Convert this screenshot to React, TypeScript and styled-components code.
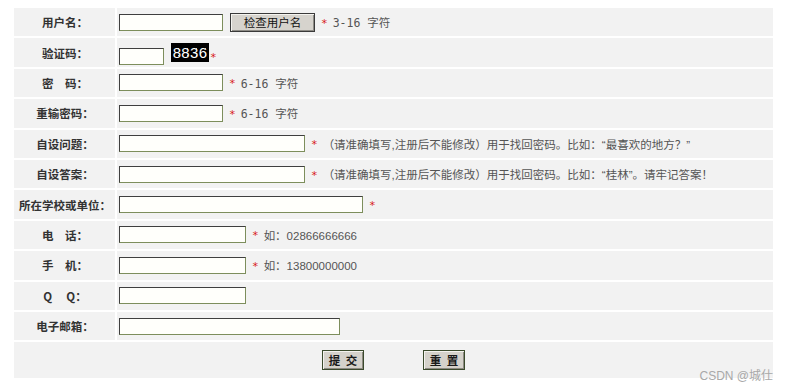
import React from "react";
import styled, { createGlobalStyle } from "styled-components";

const GlobalStyle = createGlobalStyle`
  html, body { margin: 0; padding: 0; background: #ffffff; }
  body { font-family: "Noto Sans CJK SC", "Noto Sans", sans-serif; }
`;

const Page = styled.div`
  position: relative;
  width: 788px;
  height: 390px;
  box-sizing: border-box;
  padding: 8px 15px 0 14px;
  overflow: hidden;
`;

const Table = styled.div`
  display: flex;
  flex-direction: column;
  gap: 2px;
  background: #ffffff;
`;

const Row = styled.div`
  display: grid;
  grid-template-columns: 101px 1fr;
  column-gap: 2px;
  height: 28.4px;
`;

const LabelCell = styled.div`
  background: #f2f2f2;
  display: flex;
  align-items: center;
  justify-content: center;
  font-size: 11.5px;
  font-weight: 700;
  color: #333333;
  white-space: pre;
  padding-left: 1px;
`;

const ValueCell = styled.div<{ $bottom?: boolean }>`
  background: #f2f2f2;
  display: flex;
  align-items: ${(p) => (p.$bottom ? "flex-end" : "center")};
  padding-left: 2px;
  padding-bottom: ${(p) => (p.$bottom ? "2px" : "0")};
  box-sizing: border-box;
  white-space: nowrap;
`;

const TextInput = styled.input<{ $w: number }>`
  box-sizing: border-box;
  width: ${(p) => p.$w}px;
  height: 17px;
  margin: 0;
  padding: 0 2px;
  background: #fffffb;
  border-style: solid;
  border-width: 1px;
  border-color: #3f3f3f #7d8e5c #7d8e5c #3f3f3f;
  outline: none;
  font-size: 11px;
`;

const CheckButton = styled.button`
  box-sizing: border-box;
  margin-left: 7px;
  width: 85px;
  height: 19px;
  padding: 0;
  background: #d6d3cd;
  border: 1px solid #3a3a3a;
  box-shadow: inset 1px 1px 0 #f4f3ef, inset -1px -1px 0 #8e8c86;
  font-family: "Noto Sans CJK SC", sans-serif;
  font-size: 11.5px;
  color: #111;
  line-height: 16px;
`;

const Star = styled.span`
  color: #d81818;
  font-family: "DejaVu Sans Mono", monospace;
  font-size: 11px;
  margin: 0 5px 0 6px;
  position: relative;
  top: 1px;
`;

const Hint = styled.span<{ $mono?: boolean }>`
  color: #555555;
  font-family: ${(p) =>
    p.$mono
      ? `"DejaVu Sans Mono", "Noto Sans CJK SC", monospace`
      : `"Liberation Sans", "Noto Sans CJK SC", sans-serif`};
  font-size: 11.5px;
`;

const Captcha = styled.span`
  display: inline-flex;
  align-items: center;
  justify-content: center;
  box-sizing: border-box;
  width: 38px;
  height: 19px;
  margin-left: 7px;
  margin-bottom: 3px;
  background-color: #000;
  background-image: radial-gradient(circle, #bdbdbd 0.5px, transparent 0.8px);
  background-size: 9px 7px;
  background-position: 3px 2px;
  color: #fff;
  font-family: "Liberation Sans", sans-serif;
  font-size: 15px;
  letter-spacing: 0.3px;
  line-height: 19px;
`;

const CaptchaStar = styled.span`
  color: #d81818;
  font-family: "DejaVu Sans Mono", monospace;
  font-size: 11px;
  margin-left: 1px;
  margin-bottom: 1px;
`;

const ButtonRow = styled.div`
  background: #f2f2f2;
  height: 36px;
  display: flex;
  align-items: center;
  justify-content: center;
  gap: 59px;
`;

const FormButton = styled.button`
  box-sizing: border-box;
  width: 42px;
  height: 20px;
  padding: 0;
  margin: 0;
  background: #d5d2cb;
  border: 1px solid #3b4a2c;
  box-shadow: inset 1px 1px 0 #f4f3ef, inset -1px -1px 0 #8d8a82;
  font-family: "Noto Sans CJK SC", sans-serif;
  font-size: 11.5px;
  font-weight: 700;
  letter-spacing: 1.5px;
  text-indent: 1.5px;
  color: #1a1a1a;
  white-space: pre;
  line-height: 17px;
`;

const Watermark = styled.div`
  position: absolute;
  right: 15px;
  top: 366px;
  font-family: "Liberation Sans", "Noto Sans CJK SC", sans-serif;
  font-size: 12px;
  color: #a8a8a8;
`;

type Field = {
  label: string;
  width: number;
  extra?: React.ReactNode;
};

const longHint1 = "（请准确填写,注册后不能修改）用于找回密码。比如：“最喜欢的地方？”";
const longHint2 = "（请准确填写,注册后不能修改）用于找回密码。比如：“桂林”。请牢记答案！";

const fields: Field[] = [
  { label: "密　码：", width: 104, extra: <><Star>*</Star><Hint $mono>6-16 字符</Hint></> },
  { label: "重输密码：", width: 104, extra: <><Star>*</Star><Hint $mono>6-16 字符</Hint></> },
  { label: "自设问题：", width: 186, extra: <><Star>*</Star><Hint>{longHint1}</Hint></> },
  { label: "自设答案：", width: 186, extra: <><Star>*</Star><Hint>{longHint2}</Hint></> },
  { label: "所在学校或单位：", width: 244, extra: <Star>*</Star> },
  { label: "电　话：", width: 127, extra: <><Star>*</Star><Hint>如：02866666666</Hint></> },
  { label: "手　机：", width: 127, extra: <><Star>*</Star><Hint>如：13800000000</Hint></> },
  { label: "Q　 Q：", width: 127 },
  { label: "电子邮箱：", width: 221 },
];

export default function App() {
  return (
    <>
      <GlobalStyle />
      <Page>
        <Table>
          <Row>
            <LabelCell>用户名：</LabelCell>
            <ValueCell>
              <TextInput $w={104} />
              <CheckButton type="button">检查用户名</CheckButton>
              <Star>*</Star>
              <Hint $mono>3-16 字符</Hint>
            </ValueCell>
          </Row>
          <Row>
            <LabelCell>验证码：</LabelCell>
            <ValueCell $bottom>
              <TextInput $w={45} />
              <Captcha>8836</Captcha>
              <CaptchaStar>*</CaptchaStar>
            </ValueCell>
          </Row>
          {fields.map((f) => (
            <Row key={f.label}>
              <LabelCell>{f.label}</LabelCell>
              <ValueCell>
                <TextInput $w={f.width} />
                {f.extra}
              </ValueCell>
            </Row>
          ))}
          <ButtonRow>
            <FormButton type="submit">提 交</FormButton>
            <FormButton type="reset">重 置</FormButton>
          </ButtonRow>
        </Table>
        <Watermark>CSDN @城仕</Watermark>
      </Page>
    </>
  );
}
